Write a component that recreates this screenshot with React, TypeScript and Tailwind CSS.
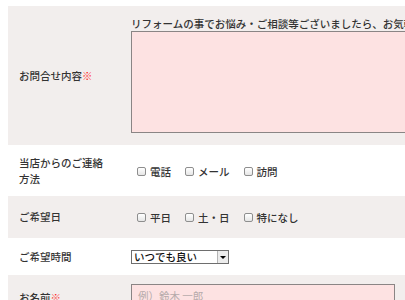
import React from 'react';

const Req = () => <span className="text-[#ff1a1a]">※</span>;

const Check = ({ label }: { label: string }) => (
  <label className="flex items-center gap-[4px]">
    <span className="w-[9px] h-[9px] rounded-[2px] border border-[#8e8e8e] bg-gradient-to-b from-white to-[#e6e6e6]" />
    <span>{label}</span>
  </label>
);

const Row = ({ label, gray, children, className }: { label: React.ReactNode; gray?: boolean; children: React.ReactNode; className?: string }) => (
  <div className={`flex items-center ${gray ? 'bg-[#f2eeed]' : 'bg-white'} ${className ?? ''}`}>
    <div className="w-[123px] shrink-0 pl-[11px] pr-[25px] leading-[16px]">{label}</div>
    <div className="flex-1 min-w-0">{children}</div>
  </div>
);

export default function App() {
  return (
    <div
      className="w-[405px] h-[300px] overflow-hidden bg-white pt-[6px] pl-[8px] text-[10.5px] font-medium text-[#333]"
      style={{ fontFamily: '"Noto Sans CJK JP", "Noto Sans", sans-serif' }}
    >
      <Row label={<>お問合せ内容<Req /></>} gray className="h-[139px]">
        <div className="whitespace-nowrap leading-[12px] mb-[1px]">リフォームの事でお悩み・ご相談等ございましたら、お気軽にお問合せください。</div>
        <div className="w-[320px] h-[102px] bg-[#fde2e2] border border-[#8a8585]" />
      </Row>

      <Row label="当店からのご連絡方法" className="h-[51px]">
        <div className="flex items-center gap-[14px] pl-[6px] pt-[2px]">
          <Check label="電話" />
          <Check label="メール" />
          <Check label="訪問" />
        </div>
      </Row>

      <Row label="ご希望日" gray className="h-[42px]">
        <div className="flex items-center gap-[14px] pl-[6px] pt-[1px]">
          <Check label="平日" />
          <Check label="土・日" />
          <Check label="特になし" />
        </div>
      </Row>

      <Row label="ご希望時間" className="h-[37px]">
        <div className="flex items-center w-[98px] h-[14px] border border-[#6e6e6e] bg-white mt-[1px]">
          <span className="flex-1 pl-[2px] leading-[12px] text-[#111]">いつでも良い</span>
          <span className="w-[11px] h-[12px] flex items-center justify-center bg-[#ececec] border-l border-[#b5b5b5]">
            <span className="w-0 h-0 border-l-[3px] border-r-[3px] border-t-[3px] border-l-transparent border-r-transparent border-t-black" />
          </span>
        </div>
      </Row>

      <div className="flex items-start bg-[#f2eeed] h-[40px] pt-[9px]">
        <div className="w-[123px] shrink-0 pl-[11px] pt-[6px] leading-[16px]">お名前<Req /></div>
        <div className="w-[264px] h-[24px] bg-[#fde2e2] border border-[#8a8585] pl-[6px] pt-[3px] font-normal text-[#b5aaaa]">例）鈴木 一郎</div>
      </div>
    </div>
  );
}
